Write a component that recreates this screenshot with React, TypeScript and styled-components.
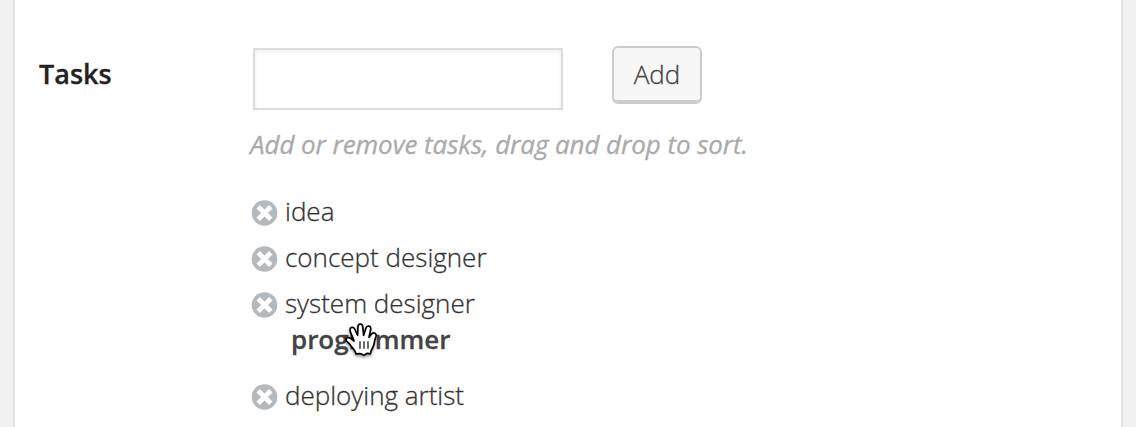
import React from 'react';
import styled, { createGlobalStyle } from 'styled-components';

const Global = createGlobalStyle`
  * { box-sizing: border-box; }
  body { margin: 0; background: #f0f0f0; font-family: "Open Sans", sans-serif; overflow: hidden; }
`;
const Panel = styled.main`
  margin: 0 13px; height: 427px; background: #fff;
  border: solid #e3e3e3; border-width: 0 2px;
  display: grid; grid-template-columns: 213px 1fr; padding: 46px 0 0 24px;
`;
const Label = styled.label`
  font-size: 27px; line-height: 37px; font-weight: 600; color: #222; padding-top: 9px;
  -webkit-text-stroke: 0.3px;
`;
const Field = styled.section` min-width: 0; `;
const Entry = styled.div` display: flex; align-items: flex-start; gap: 49px; `;
const Input = styled.input`
  width: 310px; height: 62px; margin: 2px 0 0 1px; border: 2px solid #ddd; border-radius: 0;
  background: #fff; box-shadow: inset 0 2px 4px rgba(0,0,0,.07); outline: none;
`;
const Button = styled.button`
  width: 90px; height: 58px; padding: 0 0 1px; border: 2px solid #ccc; border-bottom-width: 4px;
  border-radius: 6px; background: #f7f7f7;
  font: 300 26px "Open Sans", sans-serif; color: #444; -webkit-text-stroke: 0.3px;
`;
const Hint = styled.p`
  margin: 16px 0 0 -2px; font-size: 26px; line-height: 36px; font-style: italic; color: #aaa;
  white-space: nowrap; letter-spacing: -0.08px; -webkit-text-stroke: 0.3px;
`;
const List = styled.ul` list-style: none; margin: 26px 0 0; padding: 0; `;
const Item = styled.li`
  display: flex; align-items: center; gap: 7px; height: 46px;
  font-size: 26px; font-weight: 300; color: #333; -webkit-text-stroke: 0.3px;
`;
const Dragged = styled(Item)`
  position: relative; align-items: flex-start; font-weight: 600; color: #444;
  padding-left: 39px; line-height: 26px; letter-spacing: -0.05px;
`;
const RemoveIcon = styled.svg` flex: none; margin-top: 3px; overflow: visible; `;
const Hand = styled.svg`
  position: absolute; left: 92px; top: -4px; overflow: visible;
  filter: drop-shadow(0 2px 1.5px rgba(0,0,0,.4));
`;

const Remove = () => (
  <RemoveIcon width="26" height="26" viewBox="0 0 26 26">
    <circle cx="12.5" cy="13" r="12.8" fill="#b4b9be" />
    <path d="M6.2 6.7l12.6 12.6M18.8 6.7L6.2 19.3" stroke="#fff" strokeWidth="4.8" />
  </RemoveIcon>
);

const GrabCursor = () => (
  <Hand width="34.67" height="37.33" viewBox="312 36 104 112">
    <path
      d="M348 132C348 124 337 114 331 105C326 98 317 94 318 88C319 82 327 81 333 86L342 93C340 84 331 70 330 61C329 51 340 49 344 57L353 76L354 50C354 40 367 40 368 49L371 76L378 54C381 44 394 48 392 58L387 82L395 72C400 65 411 70 408 79C405 87 404 93 402 102C400 113 392 120 391 132C385 129 380 129 376 133Q371 138 367 133C361 129 354 131 348 132Z"
      fill="#fff" stroke="#000" strokeWidth="5" strokeLinejoin="round"
    />
    <path d="M360 94v22M372 94v22M384 94v22" stroke="#000" strokeWidth="3.5" />
  </Hand>
);

export default function App() {
  return (
    <>
      <Global />
      <Panel>
        <Label htmlFor="task">Tasks</Label>
        <Field>
          <Entry><Input id="task" /><Button>Add</Button></Entry>
          <Hint>Add or remove tasks, drag and drop to sort.</Hint>
          <List>
            <Item><Remove />idea</Item>
            <Item><Remove />concept designer</Item>
            <Item><Remove />system designer</Item>
            <Dragged>programmer<GrabCursor /></Dragged>
            <Item><Remove />deploying artist</Item>
          </List>
        </Field>
      </Panel>
    </>
  );
}
